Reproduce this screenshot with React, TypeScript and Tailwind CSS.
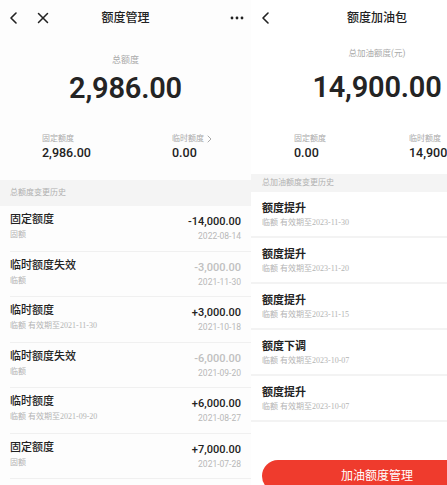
import React from 'react';

const Back = () => (
  <svg width="10" height="12" viewBox="0 0 10 12" fill="none" stroke="#222" strokeWidth="1.6" strokeLinecap="round" strokeLinejoin="round">
    <polyline points="7,1 2,6 7,11" />
  </svg>
);

const Close = () => (
  <svg width="12" height="12" viewBox="0 0 12 12" fill="none" stroke="#222" strokeWidth="1.5" strokeLinecap="round">
    <line x1="1.5" y1="1.5" x2="10.5" y2="10.5" />
    <line x1="10.5" y1="1.5" x2="1.5" y2="10.5" />
  </svg>
);

const Dots = () => (
  <svg width="14" height="4" viewBox="0 0 14 4" fill="#222">
    <circle cx="2" cy="2" r="1.4" />
    <circle cx="7" cy="2" r="1.4" />
    <circle cx="12" cy="2" r="1.4" />
  </svg>
);

interface HistoryRow {
  title: string;
  tag: string;
  until?: string;
  amount: string;
  date: string;
  faded?: boolean;
}

const leftRows: HistoryRow[] = [
  { title: '固定额度', tag: '固额', amount: '-14,000.00', date: '2022-08-14' },
  { title: '临时额度失效', tag: '临额', amount: '-3,000.00', date: '2021-11-30', faded: true },
  { title: '临时额度', tag: '临额', until: '2021-11-30', amount: '+3,000.00', date: '2021-10-18' },
  { title: '临时额度失效', tag: '临额', amount: '-6,000.00', date: '2021-09-20', faded: true },
  { title: '临时额度', tag: '临额', until: '2021-09-20', amount: '+6,000.00', date: '2021-08-27' },
  { title: '固定额度', tag: '固额', amount: '+7,000.00', date: '2021-07-28' },
  { title: '临时额度失效', tag: '临额', amount: '-2,000.00', date: '2021-07-01', faded: true },
];

const rightRows = [
  { title: '额度提升', until: '2023-11-30' },
  { title: '额度提升', until: '2023-11-20' },
  { title: '额度提升', until: '2023-11-15' },
  { title: '额度下调', until: '2023-10-07' },
  { title: '额度提升', until: '2023-10-07' },
];

const SubLine: React.FC<{ tag: string; until?: string }> = ({ tag, until }) => (
  <div className="text-[8px] leading-[12px] text-[#b4b4b4] font-['Liberation_Serif','Noto_Sans_CJK_SC',serif] whitespace-nowrap">
    {tag}
    {until && <span> 有效期至{until}</span>}
  </div>
);

const QuotaScreen = () => (
  <div className="w-[251px] h-full bg-[#fdfdfd] flex flex-col overflow-hidden font-['Roboto','Noto_Sans_CJK_SC',sans-serif]">
    <div className="h-[36px] flex items-center px-[9px] relative shrink-0">
      <Back />
      <div className="ml-[18px]"><Close /></div>
      <div className="absolute inset-x-0 top-0 h-[36px] flex items-center justify-center text-[12px] font-medium text-[#222]">额度管理</div>
      <div className="ml-auto mr-[-2px]"><Dots /></div>
    </div>
    <div className="mt-[18px] text-center text-[9px] leading-[12px] text-[#aaa]">总额度</div>
    <div className="mt-[5px] text-center text-[29px] leading-[34px] font-semibold text-[#242424] tracking-[-0.2px]">2,986.00</div>
    <div className="mt-[28px] flex pl-[42px]">
      <div className="w-[130px]">
        <div className="text-[8px] leading-[12px] text-[#aaa]">固定额度</div>
        <div className="text-[12.5px] leading-[16px] font-medium text-[#222]">2,986.00</div>
      </div>
      <div>
        <div className="text-[8px] leading-[12px] text-[#aaa] flex items-center gap-[3px]">
          临时额度
          <svg width="5" height="8" viewBox="0 0 5 8" fill="none" stroke="#aaa" strokeWidth="1" strokeLinecap="round"><polyline points="1,1 4,4 1,7" /></svg>
        </div>
        <div className="text-[12.5px] leading-[16px] font-medium text-[#222]">0.00</div>
      </div>
    </div>
    <div className="mt-[19px] h-[26px] bg-[#f4f4f4] flex items-center px-[10px] text-[8px] text-[#b0b0b0] shrink-0">总额度变更历史</div>
    <div className="flex flex-col">
      {leftRows.map((r, i) => (
        <div key={i} className="ml-[10px] h-[45.5px] border-b border-[#f0f0f0] flex justify-between pr-[10px] shrink-0">
          <div className="pt-[7px]">
            <div className="text-[11px] leading-[14px] font-medium text-[#222]">{r.title}</div>
            <div className="mt-[2px]"><SubLine tag={r.tag} until={r.until} /></div>
          </div>
          <div className="pt-[9px] flex flex-col items-end">
            <div className={`text-[11px] leading-[14px] font-medium ${r.faded ? 'text-[#c0c0c0]' : 'text-[#222]'}`}>{r.amount}</div>
            <div className="mt-[1px] text-[8.5px] leading-[12px] text-[#b8b8b8]">{r.date}</div>
          </div>
        </div>
      ))}
    </div>
  </div>
);

const RefuelScreen = () => (
  <div className="w-[196px] h-full bg-white overflow-hidden">
    <div className="w-[252px] h-full flex flex-col relative font-['Roboto','Noto_Sans_CJK_SC',sans-serif]">
      <div className="h-[36px] flex items-center px-[10px] relative shrink-0">
        <Back />
        <div className="absolute inset-x-0 top-0 h-[36px] flex items-center justify-center text-[12px] font-medium text-[#222]">额度加油包</div>
      </div>
      <div className="mt-[11px] text-center text-[8.5px] leading-[12px] text-[#aaa]">总加油额度(元)</div>
      <div className="mt-[11px] text-center text-[29px] leading-[34px] font-semibold text-[#242424] tracking-[-0.2px]">14,900.00</div>
      <div className="mt-[29px] flex pl-[43px]">
        <div className="w-[115px]">
          <div className="text-[8px] leading-[12px] text-[#aaa]">固定额度</div>
          <div className="text-[12.5px] leading-[16px] font-medium text-[#222]">0.00</div>
        </div>
        <div>
          <div className="text-[8px] leading-[12px] text-[#aaa]">临时额度</div>
          <div className="text-[12.5px] leading-[16px] font-medium text-[#222]">14,900.00</div>
        </div>
      </div>
      <div className="mt-[13px] h-[18px] bg-[#f4f4f4] flex items-center px-[11px] text-[8px] text-[#b0b0b0] shrink-0">总加油额度变更历史</div>
      <div className="flex flex-col">
        {rightRows.map((r, i) => (
          <div key={i} className="h-[46px] border-b-2 border-[#f3f3f3] px-[11px] pt-[10px] shrink-0">
            <div className="text-[11px] leading-[14px] font-bold text-[#222]">{r.title}</div>
            <div className="mt-[1px]"><SubLine tag="临额" until={r.until} /></div>
          </div>
        ))}
      </div>
      <div className="mt-auto mx-[11px] mb-[-7px] h-[32px] rounded-full bg-[#ef3b2d] flex items-center justify-center text-[12px] text-white shrink-0">加油额度管理</div>
    </div>
  </div>
);

export default function App() {
  return (
    <div className="w-[447px] h-[485px] flex overflow-hidden bg-white">
      <QuotaScreen />
      <RefuelScreen />
    </div>
  );
}
